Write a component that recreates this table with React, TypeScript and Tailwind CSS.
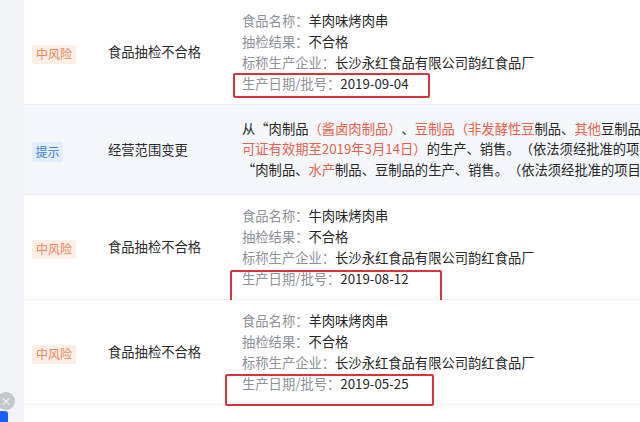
import React from "react";

type Item = { label: string; value: string };

const FONT = { fontFamily: '"Noto Sans CJK SC", "Noto Sans", sans-serif' };

function RiskBadge({ kind }: { kind: "mid" | "tip" }) {
  if (kind === "mid") {
    return (
      <span className="inline-flex items-center justify-center h-[19px] w-[44px] bg-[#fdeee6] text-[#e8875a] text-[12px] rounded-[2px]">
        中风险
      </span>
    );
  }
  return (
    <span className="inline-flex items-center justify-center h-[20px] w-[31px] bg-[#e2eefb] text-[#3c7fd6] text-[12px] rounded-[2px]">
      提示
    </span>
  );
}

function InspectRow({
  items,
  box,
}: {
  items: Item[];
  box: string;
}) {
  return (
    <div className="relative flex items-center h-[105px] border-b border-[#eceef2] bg-white">
      <div className="w-[84px] pl-[8px] shrink-0">
        <RiskBadge kind="mid" />
      </div>
      <div className="w-[134px] shrink-0 text-[13.3px] text-[#2a2a2a]">食品抽检不合格</div>
      <div className="flex flex-col text-[13.3px] leading-[21px] whitespace-nowrap">
        {items.map((it) => (
          <div key={it.label}>
            <span className="text-[#8d919a]">{it.label}：</span>
            <span className="text-[#262626]">{it.value}</span>
          </div>
        ))}
      </div>
      {/* hand-drawn annotation box */}
      <div className={`absolute border-[2.5px] border-[#d8343c] rounded-[2px] ${box}`} />
    </div>
  );
}

const red = "text-[#e9614a]";

export default function App() {
  const base = [
    { label: "抽检结果", value: "不合格" },
    { label: "标称生产企业", value: "长沙永红食品有限公司韵红食品厂" },
  ];

  return (
    <div
      className="relative w-[640px] h-[422px] overflow-hidden bg-[#f2f3f5] flex [text-spacing-trim:space-all]"
      style={FONT}
    >
      <div className="w-[24px] shrink-0" />
      <div className="flex-1 bg-white flex flex-col">
        <InspectRow
          items={[
            { label: "食品名称", value: "羊肉味烤肉串" },
            ...base,
            { label: "生产日期/批号", value: "2019-09-04" },
          ]}
          box="left-[209px] top-[73px] w-[197px] h-[25px]"
        />

        <div className="flex items-center h-[90px] border-b border-[#eceef2] bg-[#f4f7fb]">
          <div className="w-[84px] pl-[8px] shrink-0">
            <RiskBadge kind="tip" />
          </div>
          <div className="w-[134px] shrink-0 text-[13.3px] text-[#2a2a2a]">经营范围变更</div>
          <div className="flex flex-col text-[13.3px] leading-[20.5px] whitespace-nowrap text-[#262626]">
            <div>
              从“肉制品<span className={red}>（酱卤肉制品）</span>、
              <span className={red}>豆制品（非发酵性豆</span>制品、
              <span className={red}>其他</span>豆制品）、
            </div>
            <div>
              <span className={red}>可证有效期至2019年3月14日）</span>的生产、销售。（依法须经批准的项目，
            </div>
            <div>
              “肉制品、<span className={red}>水产</span>制品、豆制品的生产、销售。（依法须经批准的项目，经
            </div>
          </div>
        </div>

        <InspectRow
          items={[
            { label: "食品名称", value: "牛肉味烤肉串" },
            ...base,
            { label: "生产日期/批号", value: "2019-08-12" },
          ]}
          box="left-[206px] top-[75px] w-[212px] h-[32px]"
        />

        <InspectRow
          items={[
            { label: "食品名称", value: "羊肉味烤肉串" },
            ...base,
            { label: "生产日期/批号", value: "2019-05-25" },
          ]}
          box="left-[201px] top-[74px] w-[209px] h-[32px]"
        />
      </div>

      {/* floating widgets at bottom-left */}
      <div className="absolute left-[-3px] top-[392px] w-[18px] h-[18px] rounded-full bg-[#c4c7cc] flex items-center justify-center text-white text-[11px] leading-none">
        ×
      </div>
      <div className="absolute left-[-4px] top-[411px] w-[12px] h-[14px] rounded-[3px] bg-[#1a5ef5]" />
    </div>
  );
}
